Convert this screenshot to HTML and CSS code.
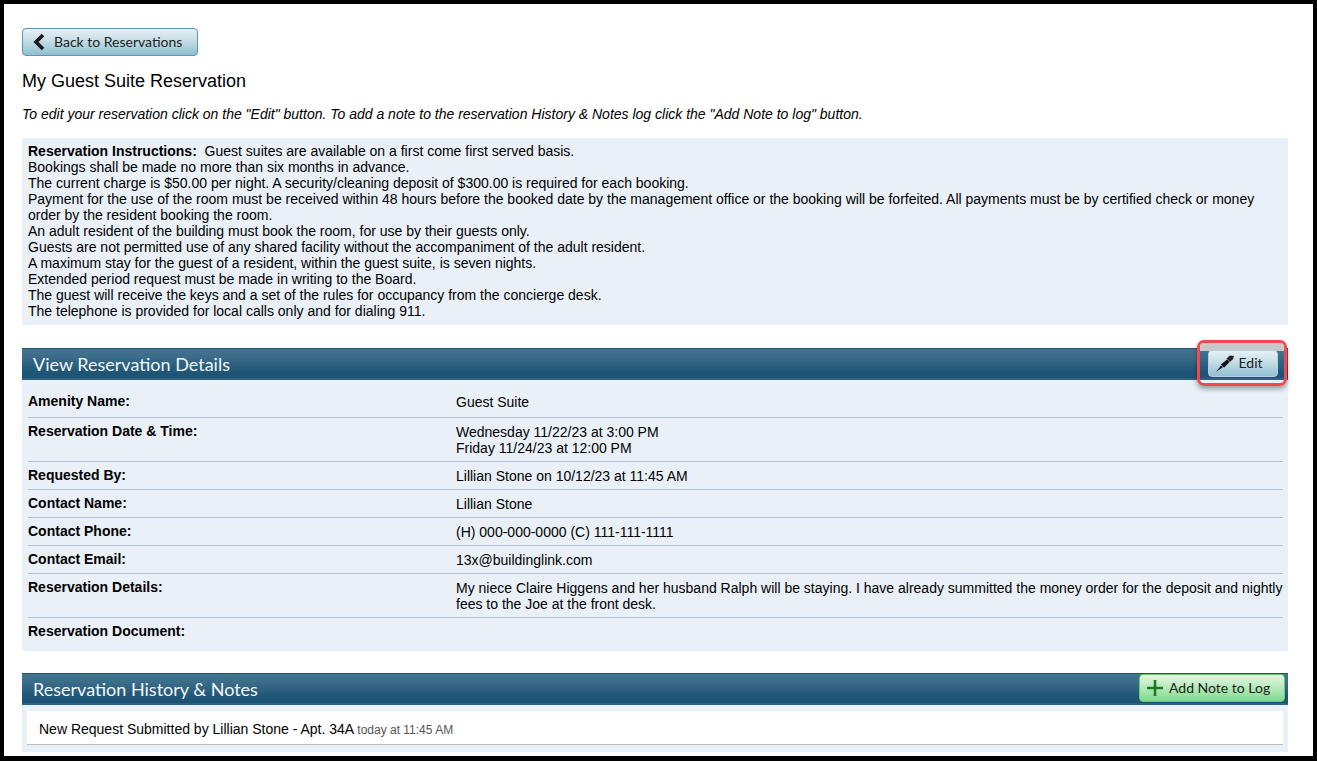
FILE: index.html
```html
<!DOCTYPE html>
<html lang="en">
<head>
<meta charset="utf-8">
<title>My Guest Suite Reservation</title>
<link rel="stylesheet" href="styles.css">
</head>
<body>
<div class="frame">
  <a class="btn btn-blue btn-back" href="#">
    <svg class="ico-back" width="14" height="18" viewBox="0 0 14 18"><path d="M11 2 L4 9 L11 16" fill="none" stroke="#1a1a1a" stroke-width="3.6"/></svg>
    <span>Back to Reservations</span>
  </a>
  <h1 class="title">My Guest Suite Reservation</h1>
  <p class="hint">To edit your reservation click on the "Edit" button. To add a note to the reservation History &amp; Notes log click the "Add Note to log" button.</p>
  <div class="instructions">
    <b>Reservation Instructions:</b>&nbsp; Guest suites are available on a first come first served basis.<br>
    Bookings shall be made no more than six months in advance.<br>
    The current charge is $50.00 per night. A security/cleaning deposit of $300.00 is required for each booking.<br>
    Payment for the use of the room must be received within 48 hours before the booked date by the management office or the booking will be forfeited. All payments must be by certified check or money order by the resident booking the room.<br>
    An adult resident of the building must book the room, for use by their guests only.<br>
    Guests are not permitted use of any shared facility without the accompaniment of the adult resident.<br>
    A maximum stay for the guest of a resident, within the guest suite, is seven nights.<br>
    Extended period request must be made in writing to the Board.<br>
    The guest will receive the keys and a set of the rules for occupancy from the concierge desk.<br>
    The telephone is provided for local calls only and for dialing 911.
  </div>

  <section class="section section-details">
    <header class="bar">
      <h2>View Reservation Details</h2>
      <span class="highlight">
        <a class="btn btn-blue btn-edit" href="#">
          <svg width="20" height="20" viewBox="0 0 20 20"><path d="M1 19 L6 12.5 L8 14 Z" fill="#111"/><path d="M6 11.5 L12 6.5 L14.5 9 L9 14.8 Z" fill="#111"/><path d="M11.5 5.5 L15 2.5 L19 3 L18 6 L15 9 Z" fill="#222"/></svg>
          <span>Edit</span>
        </a>
      </span>
    </header>
    <dl class="details">
      <div class="row r1"><dt>Amenity Name:</dt><dd>Guest Suite</dd></div>
      <div class="row"><dt>Reservation Date &amp; Time:</dt><dd>Wednesday 11/22/23 at 3:00 PM<br>Friday 11/24/23 at 12:00 PM</dd></div>
      <div class="row"><dt>Requested By:</dt><dd>Lillian Stone on 10/12/23 at 11:45 AM</dd></div>
      <div class="row"><dt>Contact Name:</dt><dd>Lillian Stone</dd></div>
      <div class="row"><dt>Contact Phone:</dt><dd>(H) 000-000-0000 (C) 111-111-1111</dd></div>
      <div class="row"><dt>Contact Email:</dt><dd>13x@buildinglink.com</dd></div>
      <div class="row"><dt>Reservation Details:</dt><dd>My niece Claire Higgens and her husband Ralph will be staying. I have already summitted the money order for the deposit and nightly fees to the Joe at the front desk.</dd></div>
      <div class="row last"><dt>Reservation Document:</dt><dd></dd></div>
    </dl>
  </section>

  <section class="section section-history">
    <header class="bar">
      <h2>Reservation History &amp; Notes</h2>
      <a class="btn btn-green" href="#">
        <svg width="18" height="18" viewBox="0 0 18 18"><path d="M9 1 V17 M1 9 H17" stroke="#1f7a1f" stroke-width="2.6" fill="none"/></svg>
        <span>Add Note to Log</span>
      </a>
    </header>
    <div class="log">
      <div class="log-entry">New Request Submitted by Lillian Stone - Apt. 34A <small>today at 11:45 AM</small></div>
    </div>
  </section>
</div>
</body>
</html>
```
FILE: styles.css
```css
* { box-sizing: border-box; }
html, body { margin: 0; padding: 0; height: 100%; overflow: hidden; background: #000; }
body { font-family: "Liberation Sans", Arial, sans-serif; font-size: 14px; line-height: 16px; color: #000; }
.frame {
  width: 1309px; height: 752px; margin: 4px 0 0 4px;
  background: #fff; padding: 24px 25px 0 18px; overflow: hidden;
}
.btn {
  display: inline-flex; align-items: center;
  font-family: Lato, sans-serif; font-size: 14px; color: #222; text-decoration: none;
  border-radius: 4px;
}
.btn-blue {
  background: linear-gradient(#e6f1f5 0%, #c4dde6 45%, #8fbfd0 100%);
  border: 1px solid #5c97ae;
}
.btn-back { width: 176px; height: 28px; padding-left: 9px; gap: 8px; vertical-align: top; }
.ico-back { flex: none; }
.title { margin: 14px 0 0; font-size: 18px; line-height: 22px; font-weight: 400; }
.hint { margin: 13px 0 0; font-style: italic; line-height: 18px; }
.instructions {
  margin-top: 15px; padding: 5px 6px 6px; background: #e9f0f7; height: 187px;
}
.section { margin-top: 23px; }
.bar {
  display: flex; align-items: center; justify-content: space-between;
  height: 32px; padding: 0 3px 0 11px;
  background: linear-gradient(#44748f 0%, #3a6b88 30%, #205777 75%, #1c5375 100%);
  border-top: 1px solid #1f5676; border-bottom: 2px solid #2c6283;
  position: relative;
}
.bar h2 { margin: 0; font-family: Lato, sans-serif; font-size: 18px; line-height: 22px; font-weight: 400; color: #f3f7fa; }
.section-details .bar { padding-right: 10px; }
.highlight {
  position: absolute; right: 1px; top: -9px; width: 90px; height: 46px;
  border: 3px solid #f04a50; border-radius: 7px; box-shadow: 0 3px 5px rgba(0,0,0,.35);
  display: flex; align-items: center; justify-content: center; padding-top: 0;
}
.highlight::before {
  content: ""; position: absolute; left: 0; right: 0; top: 0; height: 8px; background: #c8c8c8; border-radius: 4px 4px 0 0; z-index: 0;
}
.btn-edit {
  position: relative; width: 70px; height: 27px; padding-left: 6px; gap: 4px; border-color: #b5d3de; margin-left: 1px;
}
.details { margin: 0; background: #e9f0f7; padding: 0 5px 0 6px; height: 271px; }
.row { display: grid; grid-template-columns: 428px 1fr; border-bottom: 1px solid #b4c1d9; padding: 6px 0 5px; }
.row.r1 { padding: 14px 0 6px; height: 38px; }
.row.r1 dt { margin-top: -1px; }
.row.last { border-bottom: 0; }
.row dt { font-weight: 700; margin: 0; margin-top: -1px; }
.row dd { margin: 0; }
.section-history { margin-top: 22px; }
.btn-green {
  width: 146px; height: 28px; padding-left: 6px; gap: 5px;
  background: linear-gradient(#e3f6e4 0%, #b9ebbd 45%, #7fdb8c 100%);
  border: 1px solid #67c977;
  margin-bottom: 1px;
}
.log { background: #e9f0f7; padding: 6px 5px 6px; height: 47px; }
.log-entry { background: #fff; height: 34px; border-bottom: 1px solid #bdbdbd; padding: 10px 12px 0; font-size: 14px; }
.log-entry small { font-size: 12px; color: #555; }
```
